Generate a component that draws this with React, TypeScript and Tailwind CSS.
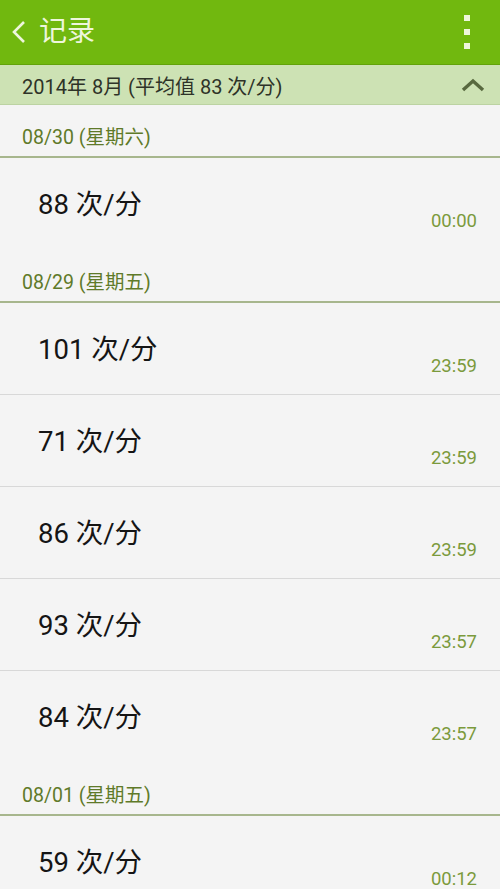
const font = "font-['Roboto','Noto_Sans_CJK_SC',sans-serif]";

type Entry = { bpm: number; time: string };
type Day = { date: string; entries: Entry[] };

const days: Day[] = [
  { date: "08/30 (星期六)", entries: [{ bpm: 88, time: "00:00" }] },
  {
    date: "08/29 (星期五)",
    entries: [
      { bpm: 101, time: "23:59" },
      { bpm: 71, time: "23:59" },
      { bpm: 86, time: "23:59" },
      { bpm: 93, time: "23:57" },
      { bpm: 84, time: "23:57" },
    ],
  },
  { date: "08/01 (星期五)", entries: [{ bpm: 59, time: "00:12" }] },
];

export default function App() {
  return (
    <div className={`h-[889px] w-[500px] overflow-hidden bg-[#f4f4f4] ${font}`}>
      {/* action bar */}
      <div className="flex h-[65px] items-center bg-[#71b80f] pl-[10px] pr-[30px] border-b border-[#62a30a]">
        <svg width="18" height="26" viewBox="0 0 18 26" className="mr-[11px]">
          <path d="M14 3 L4 13 L14 23" fill="none" stroke="#eef6dc" strokeWidth="2.6" />
        </svg>
        <span className="text-[28px] leading-none text-[#eef6dc]">记录</span>
        <div className="ml-auto flex flex-col gap-[8px]">
          <span className="block h-[6px] w-[6px] bg-[#eef6dc]" />
          <span className="block h-[6px] w-[6px] bg-[#eef6dc]" />
          <span className="block h-[6px] w-[6px] bg-[#eef6dc]" />
        </div>
      </div>

      {/* month bar */}
      <div className="flex h-[40px] items-center justify-between bg-[#cde2b4] pl-[22px] pr-[15px] border-b border-[#bcd3a2]">
        <span className="pt-[4px] text-[20px] text-[#2e3328]">2014年 8月 (平均值 83 次/分)</span>
        <svg width="24" height="14" viewBox="0 0 24 14">
          <path d="M2 12 L12 3 L22 12" fill="none" stroke="#58693f" strokeWidth="3.4" />
        </svg>
      </div>

      {days.map((d) => (
        <div key={d.date}>
          <div className="flex h-[53px] items-end border-b-2 border-[#a7b68d] pb-[4px] pl-[22px]">
            <span className="text-[19.5px] text-[#5f7a29]">{d.date}</span>
          </div>
          {d.entries.map((e, i) => (
            <div
              key={i}
              className={`flex h-[92px] items-start justify-between pl-[38px] pr-[23px] ${
                i < d.entries.length - 1 ? "border-b border-[#d8d8d8]" : ""
              }`}
            >
              <span className="mt-[33px] text-[27.5px] leading-none text-[#151515]">{e.bpm} 次/分</span>
              <span className="mt-[54px] text-[18.5px] leading-none text-[#7b9a3c]">{e.time}</span>
            </div>
          ))}
        </div>
      ))}
    </div>
  );
}
